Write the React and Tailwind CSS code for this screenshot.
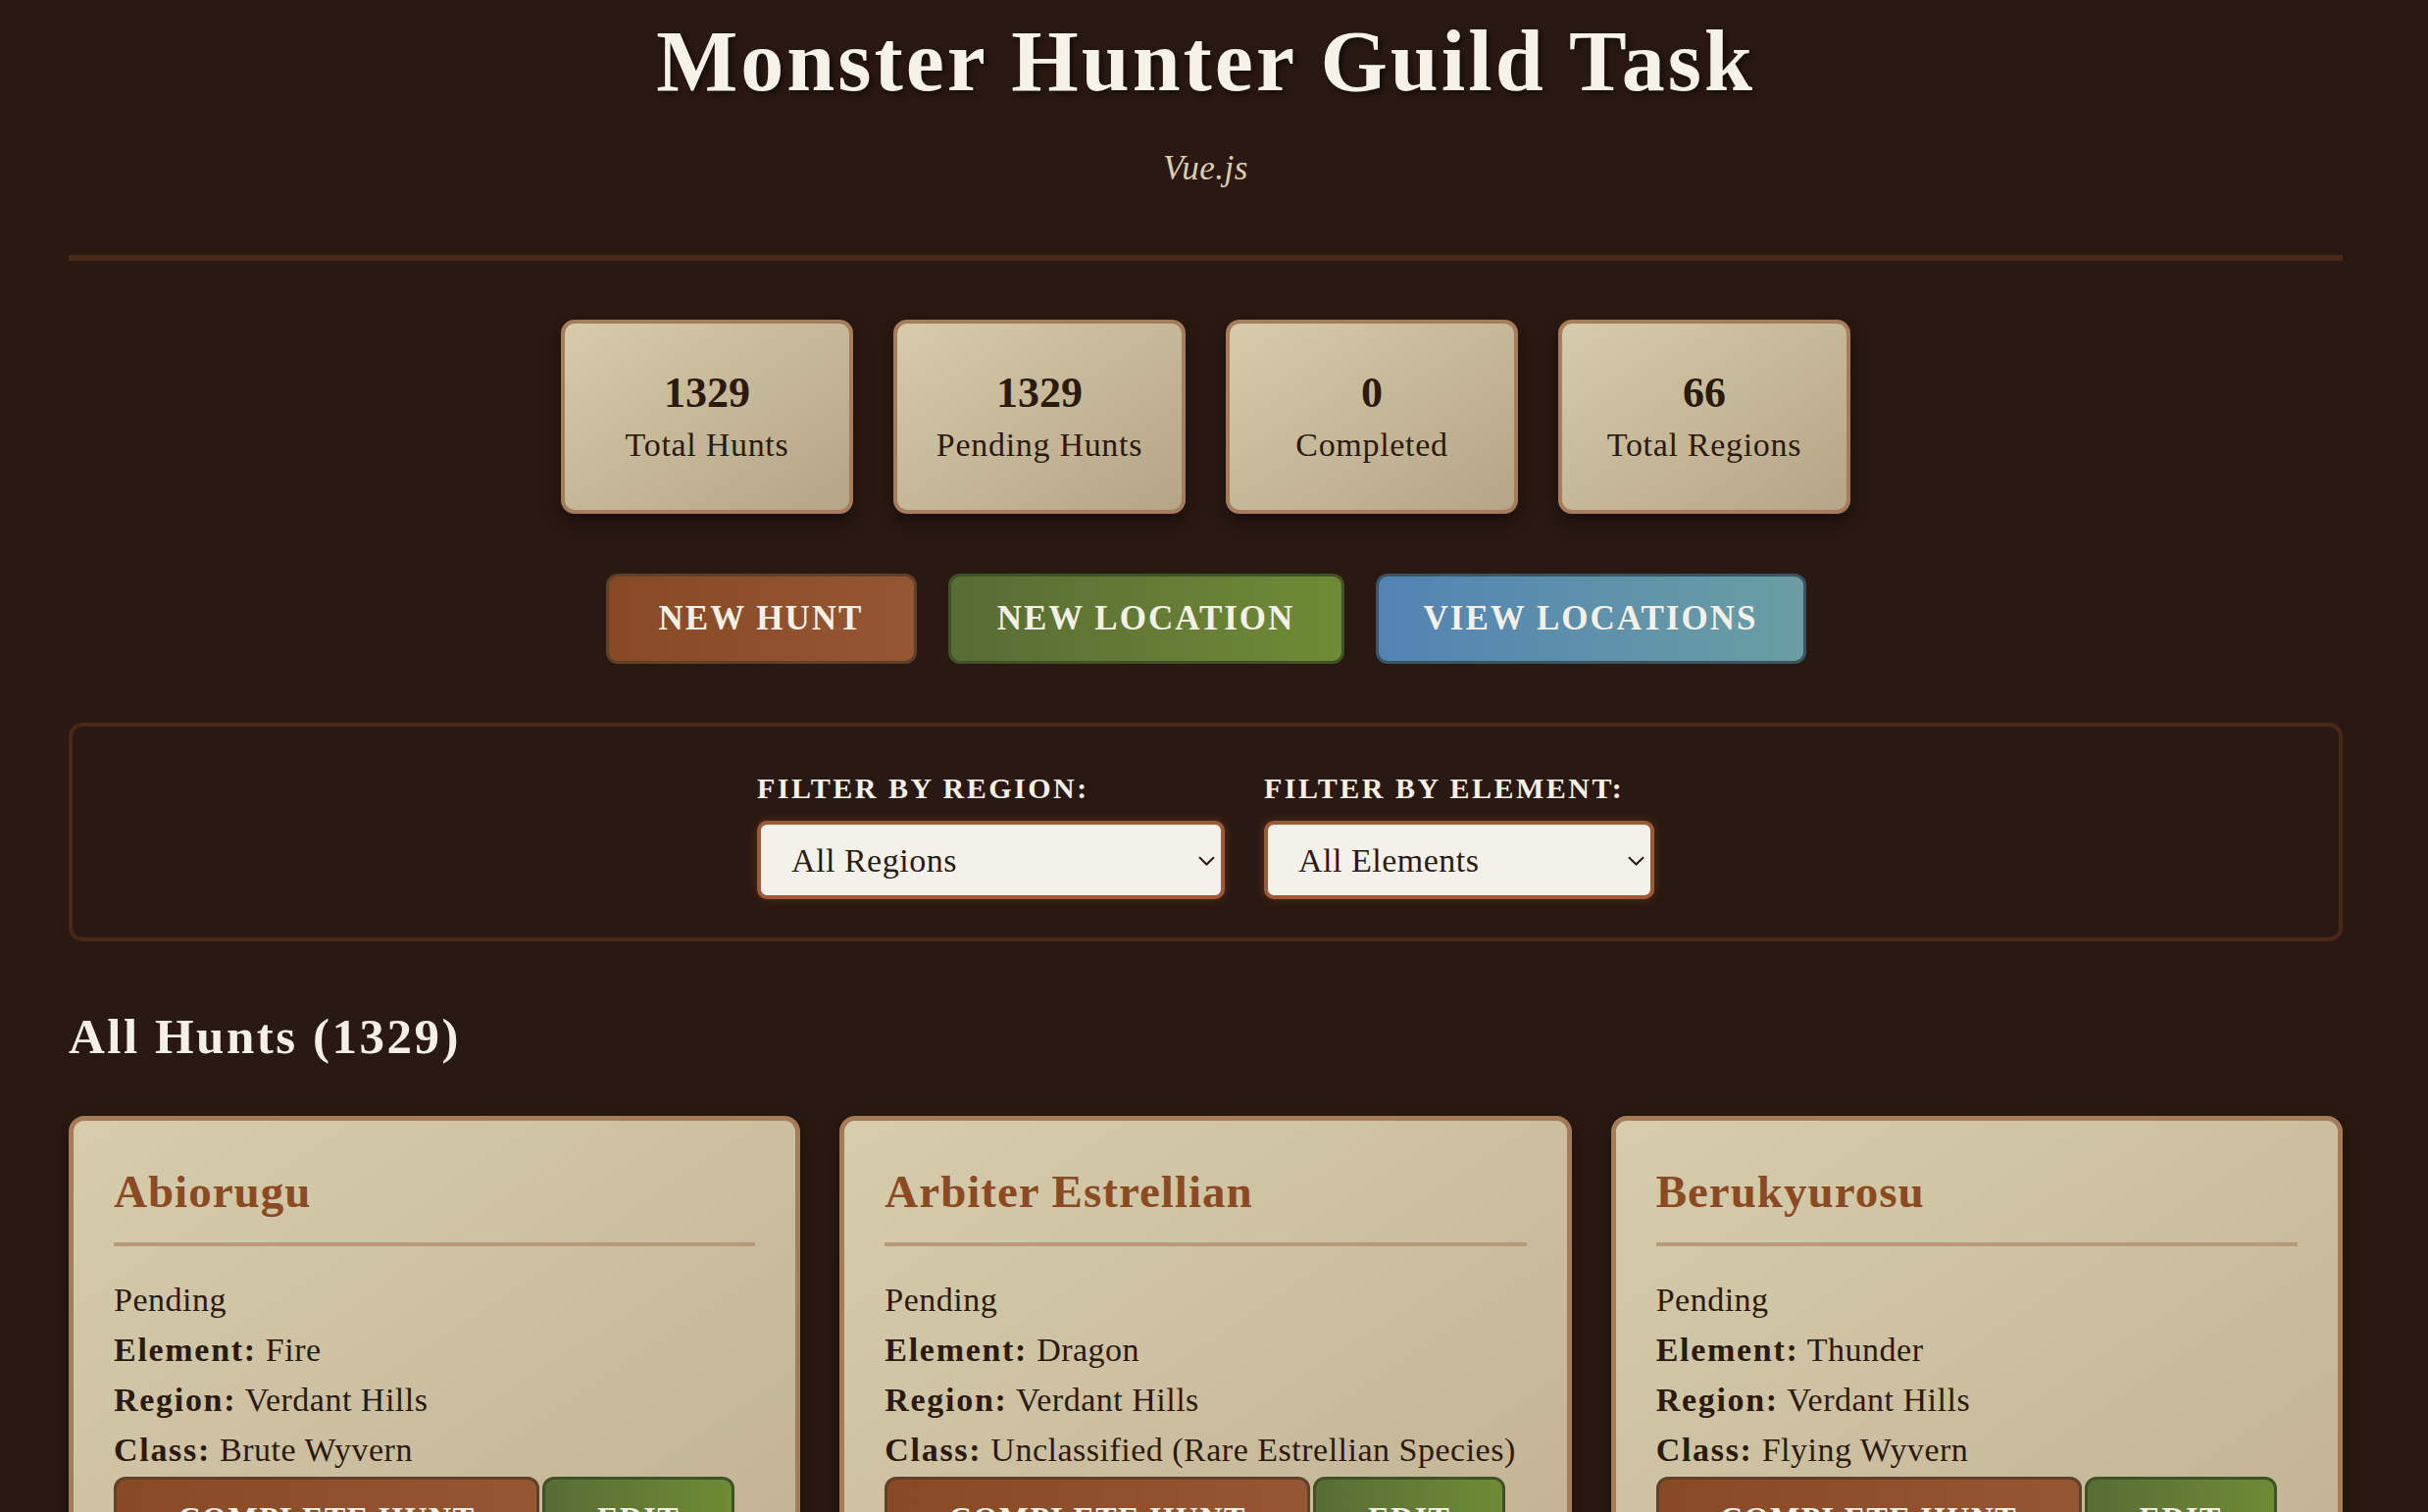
import React from "react";

const stats = [
  { n: "1329", l: "Total Hunts" },
  { n: "1329", l: "Pending Hunts" },
  { n: "0", l: "Completed" },
  { n: "66", l: "Total Regions" },
];

const hunts = [
  { name: "Abiorugu", element: "Fire", region: "Verdant Hills", cls: "Brute Wyvern" },
  { name: "Arbiter Estrellian", element: "Dragon", region: "Verdant Hills", cls: "Unclassified (Rare Estrellian Species)" },
  { name: "Berukyurosu", element: "Thunder", region: "Verdant Hills", cls: "Flying Wyvern" },
];

function Chevron() {
  return (
    <svg className="pointer-events-none absolute right-[10px] top-[36px]" width="17" height="10" viewBox="0 0 17 10" fill="none">
      <path d="M1 1.2 L8.5 8.5 L16 1.2" stroke="#2a1a10" strokeWidth="2" />
    </svg>
  );
}

function FilterSelect({ label, value, width }) {
  return (
    <div className="flex flex-col">
      <div className="text-[30px] leading-none font-bold uppercase tracking-[2.5px] text-[#f4f0e6] mt-[48px]">{label}</div>
      <div className={`relative mt-[18px] ${width}`}>
        <select
          defaultValue={value}
          className="appearance-none w-full h-[80px] rounded-[10px] border-[4px] border-[#9d5a35] bg-[#f4f1ea] pl-[31px] text-[34px] tracking-[0.5px] text-[#2a1a10] shadow-[0_0_10px_rgba(160,90,50,0.35)] outline-none font-['Liberation_Serif',serif]"
        >
          <option>{value}</option>
        </select>
        <Chevron />
      </div>
    </div>
  );
}

export default function App() {
  return (
    <div className="w-[2476px] h-[1542px] overflow-hidden bg-[#2a1912] font-['Liberation_Serif',serif] text-[#2a1a10]">
      <div className="ml-[70px] w-[2319px] flex flex-col">
        {/* Header */}
        <div className="flex flex-col items-center border-b-[6px] border-[#4a2818] pb-[71px]">
          <h1 className="mt-[19px] text-[88px] leading-none font-bold tracking-[3px] text-[#f6f2e8] [text-shadow:3px_3px_6px_rgba(0,0,0,0.55)]">
            Monster Hunter Guild Task
          </h1>
          <div className="mt-[47px] text-[35px] leading-none italic tracking-[0.5px] text-[#dccdae]">Vue.js</div>
        </div>

        {/* Stats */}
        <div className="mt-[60px] flex justify-center gap-[41px]">
          {stats.map((s, i) => (
            <div
              key={i}
              className="w-[298px] h-[198px] rounded-[14px] border-[4px] border-[#a67c5a] bg-linear-to-br from-[#d6cbab] to-[#b5a587] shadow-[0_8px_18px_rgba(0,0,0,0.45)] flex flex-col items-center justify-center"
            >
              <div className="text-[44px] leading-none font-bold text-[#2a1a10]">{s.n}</div>
              <div className="mt-[14px] text-[34px] leading-none tracking-[0.7px] text-[#2a1a10]">{s.l}</div>
            </div>
          ))}
        </div>

        {/* Action buttons */}
        <div className="mt-[61px] flex justify-center gap-[32px]">
          <button className="w-[317px] h-[92px] rounded-[12px] border-[3px] border-[#5e4128] bg-linear-to-r from-[#874a24] to-[#955634] text-[35px] font-bold uppercase tracking-[2px] text-[#f4f0e6]">
            New Hunt
          </button>
          <button className="w-[404px] h-[92px] rounded-[12px] border-[3px] border-[#3f5327] bg-linear-to-r from-[#586c35] to-[#6f8b35] text-[35px] font-bold uppercase tracking-[2px] text-[#f4f0e6]">
            New Location
          </button>
          <button className="w-[439px] h-[92px] rounded-[12px] border-[3px] border-[#3b5563] bg-linear-to-r from-[#5383b3] to-[#6a9ea2] text-[35px] font-bold uppercase tracking-[2px] text-[#f4f0e6]">
            View Locations
          </button>
        </div>

        {/* Filters */}
        <div className="mt-[60px] h-[223px] rounded-[14px] border-[4px] border-[#4a2818] flex justify-center gap-[40px]">
          <FilterSelect label="Filter by Region:" value="All Regions" width="w-[477px]" />
          <FilterSelect label="Filter by Element:" value="All Elements" width="w-[398px]" />
        </div>

        {/* Hunts heading */}
        <h2 className="mt-[72px] text-[51px] leading-none font-bold tracking-[2.5px] text-[#f4f0e6]">All Hunts (1329)</h2>

        {/* Cards */}
        <div className="mt-[55px] grid grid-cols-3 gap-[40px]">
          {hunts.map((h, i) => (
            <div
              key={i}
              className="rounded-[16px] border-[5px] border-[#a67b57] bg-linear-to-br from-[#d6cdac] to-[#c1b293] shadow-[0_8px_18px_rgba(0,0,0,0.45)] px-[41px] pt-[49px] pb-[40px]"
            >
              <div className="text-[47px] leading-none font-bold tracking-[1px] text-[#8b4a22]">{h.name}</div>
              <div className="mt-[28px] h-[4px] bg-[#b99a78]" />
              <div className="mt-[29px] text-[34px] leading-[51px] tracking-[0.5px] whitespace-nowrap text-[#2a1a10]">
                <div>Pending</div>
                <div><span className="font-bold tracking-[1.7px]">Element:</span> {h.element}</div>
                <div><span className="font-bold tracking-[1.7px]">Region:</span> {h.region}</div>
                <div><span className="font-bold tracking-[1.7px]">Class:</span> {h.cls}</div>
              </div>
              <div className="mt-[2px] flex gap-[3px]">
                <button className="w-[434px] h-[92px] pb-[8px] rounded-[12px] border-[3px] border-[#5e4128] bg-linear-to-r from-[#874a24] to-[#955634] text-[32px] font-bold uppercase tracking-[1.5px] text-[#f4f0e6]">
                  Complete Hunt
                </button>
                <button className="w-[196px] h-[92px] pb-[8px] rounded-[12px] border-[3px] border-[#3f5327] bg-linear-to-r from-[#586c35] to-[#6f8b35] text-[32px] font-bold uppercase tracking-[1.5px] text-[#f4f0e6]">
                  Edit
                </button>
              </div>
            </div>
          ))}
        </div>
      </div>
    </div>
  );
}
